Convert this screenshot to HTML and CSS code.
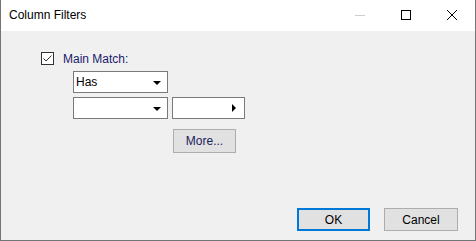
FILE: index.html
```html
<!DOCTYPE html>
<html lang="en">
<head>
  <meta charset="UTF-8">
  <title>Column Filters</title>
  <link rel="stylesheet" href="styles.css">
</head>
<body>
  <div class="window">
    <div class="titlebar">
      <span class="title">Column Filters</span>
      <div class="caption-buttons">
        <span class="cap-btn">
          <svg width="10" height="10" viewBox="0 0 10 10"><path d="M0 5.5H10" stroke="#cccccc" stroke-width="1"/></svg>
        </span>
        <span class="cap-btn">
          <svg width="10" height="10" viewBox="0 0 10 10"><rect x="0.5" y="0.5" width="9" height="9" fill="none" stroke="#000" stroke-width="1"/></svg>
        </span>
        <span class="cap-btn">
          <svg width="10" height="10" viewBox="0 0 10 10"><path d="M0 0L10 10M10 0L0 10" stroke="#000" stroke-width="1"/></svg>
        </span>
      </div>
    </div>

    <div class="content">
      <label class="check-row">
        <span class="checkbox">
          <svg width="11" height="11" viewBox="0 0 11 11"><path d="M1.5 5.5L4 8L9.5 2.5" fill="none" stroke="#333" stroke-width="1"/></svg>
        </span>
        <span class="check-label">Main Match:</span>
      </label>

      <div class="fields">
        <div class="field-row">
          <div class="combo combo-wide">
            <span class="combo-text">Has</span>
            <span class="arrow-down"></span>
          </div>
        </div>
        <div class="field-row">
          <div class="combo combo-wide">
            <span class="combo-text"></span>
            <span class="arrow-down"></span>
          </div>
          <div class="combo combo-narrow">
            <span class="combo-text"></span>
            <span class="arrow-right"></span>
          </div>
        </div>
        <div class="more-row">
          <button class="btn btn-more">More...</button>
        </div>
      </div>

      <div class="footer">
        <button class="btn btn-ok">OK</button>
        <button class="btn btn-cancel">Cancel</button>
      </div>
    </div>
  </div>
</body>
</html>
```

FILE: styles.css
```css
* {
  box-sizing: border-box;
  margin: 0;
  padding: 0;
}
body {
  font-family: "Liberation Sans", Arial, sans-serif;
  font-size: 12px;
  color: #000;
  background-color: #fff;
}
.window {
  width: 476px;
  height: 241px;
  display: flex;
  flex-direction: column;
  border-left: 1px solid #747474;
  border-right: 1px solid #747474;
  border-bottom: 1px solid #747474;
}
.titlebar {
  height: 31px;
  background-color: #fff;
  display: flex;
  align-items: center;
  justify-content: space-between;
}
.title {
  padding-left: 8px;
  margin-top: -1px;
  color: #000;
}
.caption-buttons {
  display: flex;
  height: 100%;
}
.cap-btn {
  width: 46px;
  height: 100%;
  display: flex;
  align-items: center;
  justify-content: center;
}
.cap-btn svg {
  margin-top: -1px;
}
.content {
  flex: 1;
  background-color: #f0f0f0;
  display: flex;
  flex-direction: column;
  padding: 21px 17px 9px 40px;
}
.check-row {
  display: flex;
  align-items: center;
  height: 13px;
}
.checkbox {
  width: 13px;
  height: 13px;
  border: 1px solid #333;
  background-color: #fff;
  display: flex;
  align-items: center;
  justify-content: center;
}
.check-label {
  margin-left: 9px;
  color: #1b1b6b;
}
.fields {
  margin-left: 32px;
  margin-top: 6px;
  display: flex;
  flex-direction: column;
  gap: 4px;
}
.field-row {
  display: flex;
  gap: 4px;
}
.combo {
  height: 22px;
  border: 1px solid #7a7a7a;
  background-color: #fff;
  display: flex;
  align-items: center;
  justify-content: space-between;
  padding: 0 6px 0 2px;
}
.combo-wide {
  width: 95px;
}
.combo-narrow {
  width: 73px;
  padding-right: 8px;
}
.arrow-down {
  width: 0;
  height: 0;
  border-left: 4px solid transparent;
  border-right: 4px solid transparent;
  border-top: 4px solid #000;
  margin-top: 1px;
}
.arrow-right {
  width: 0;
  height: 0;
  border-top: 4px solid transparent;
  border-bottom: 4px solid transparent;
  border-left: 4px solid #000;
}
.more-row {
  margin-top: 6px;
  padding-left: 100px;
}
.btn {
  font-family: "Liberation Sans", Arial, sans-serif;
  font-size: 12px;
  color: #000;
  background-color: #e1e1e1;
  border: 1px solid #adadad;
}
.btn-more {
  width: 63px;
  height: 24px;
  color: #1b1b5b;
}
.footer {
  margin-top: auto;
  display: flex;
  justify-content: flex-end;
  gap: 14px;
}
.btn-ok {
  width: 73px;
  height: 23px;
  border: 2px solid #0078d7;
}
.btn-cancel {
  width: 74px;
  height: 23px;
}
```
